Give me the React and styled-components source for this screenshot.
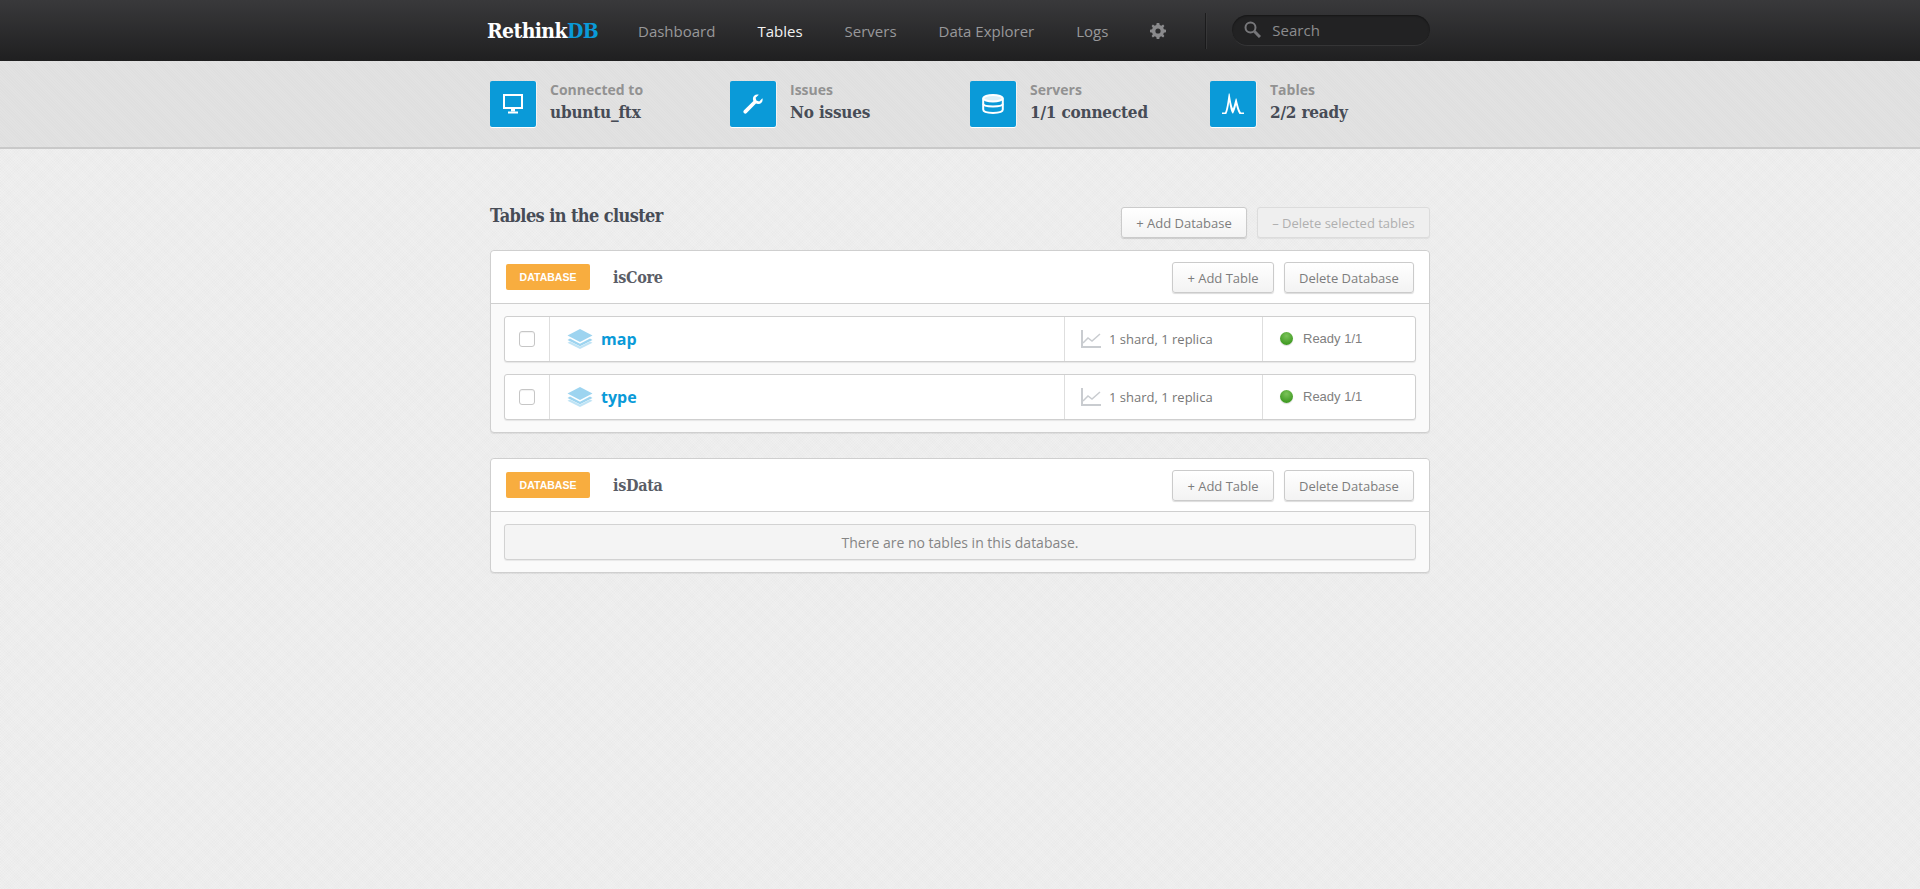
import React from "react";
import styled, { createGlobalStyle } from "styled-components";

const SERIF = '"DejaVu Serif Condensed", "DejaVu Serif", serif';
const SANS = '"Open Sans", sans-serif';
const HELV = '"Liberation Sans", sans-serif';

const GlobalStyle = createGlobalStyle`
  html, body {
    margin: 0;
    padding: 0;
    height: 100%;
  }
  body {
    font-family: ${SANS};
    background-color: #ededed;
    background-image: repeating-linear-gradient(45deg, rgba(255,255,255,0.14) 0 1px, transparent 1px 2px),
      repeating-linear-gradient(-45deg, rgba(0,0,0,0.012) 0 1px, transparent 1px 2px);
  }
  #root {
    min-height: 889px;
  }
`;

const Wrap = styled.div`
  width: 940px;
  margin: 0 auto;
`;

const TopBar = styled.header`
  height: 61px;
  background: linear-gradient(#39393b, #1f1f20);
`;
const TopInner = styled(Wrap)`
  display: flex;
  align-items: center;
  height: 61px;
`;
const Logo = styled.div`
  flex: none;
  width: 151px;
  margin-left: -3px;
  font-family: ${SERIF};
  font-weight: 700;
  font-size: 21px;
  letter-spacing: -0.6px;
  color: #fff;
  span {
    color: #0a9ad8;
  }
`;
const Nav = styled.nav`
  display: flex;
  flex: none;
  align-items: center;
  gap: 42px;
  font-size: 15px;
`;
const NavLink = styled.a`
  white-space: nowrap;
  color: ${(p) => (p.$active ? "#f2f2f2" : "#98989a")};
`;
const Gear = styled.svg`
  display: block;
  width: 16px;
  height: 16px;
  margin-top: 1px;
  fill: #8a8a8c;
`;
const Divider = styled.div`
  flex: none;
  width: 1px;
  height: 36px;
  margin-left: 39px;
  background: #171718;
  border-right: 1px solid #3a3a3b;
  opacity: 0.8;
`;
const Search = styled.div`
  display: flex;
  flex: none;
  align-items: center;
  box-sizing: border-box;
  width: 198px;
  height: 31px;
  margin-left: 25px;
  margin-top: -1px;
  padding-left: 12px;
  border-radius: 16px;
  background: #222223;
  border-bottom: 1px solid #353536;
  box-shadow: inset 0 1px 2px rgba(0, 0, 0, 0.4);
  color: #8c8c8e;
  font-size: 15px;
`;
const SearchIcon = styled.svg`
  width: 17px;
  height: 17px;
  margin-right: 11px;
  fill: none;
  stroke: #77777a;
  stroke-width: 2;
`;

const StatusBar = styled.section`
  height: 86px;
  background-color: #dfdfdf;
  background-image: repeating-linear-gradient(45deg, rgba(255,255,255,0.1) 0 1px, transparent 1px 2px);
  border-bottom: 2px solid #c9c9c9;
`;
const StatusInner = styled(Wrap)`
  display: grid;
  grid-template-columns: repeat(4, 240px);
  padding-top: 20px;
`;
const StatusItem = styled.div`
  display: flex;
  align-items: flex-start;
`;
const StatusIcon = styled.div`
  display: flex;
  align-items: center;
  justify-content: center;
  width: 46px;
  height: 46px;
  border-radius: 2px;
  background: #0a9ad8;
  box-shadow: 0 1px 0 #fff, 1px 0 0 rgba(255, 255, 255, 0.6);
  svg {
    display: block;
  }
`;
const StatusText = styled.div`
  margin-left: 14px;
  margin-top: -2px;
`;
const StatusLabel = styled.div`
  margin-top: 1px;
  font-size: 14px;
  line-height: 20px;
  font-weight: 700;
  color: #929292;
`;
const StatusValue = styled.div`
  margin-top: 1px;
  font-family: ${SERIF};
  font-size: 17px;
  line-height: 22px;
  font-weight: 700;
  color: #474c56;
  letter-spacing: -0.2px;
`;

const Main = styled(Wrap)`
  padding-top: 58px;
`;
const TitleRow = styled.div`
  display: flex;
  align-items: flex-start;
  justify-content: space-between;
  height: 43px;
`;
const Title = styled.h1`
  margin: -3px 0 0;
  font-family: ${SERIF};
  font-size: 18px;
  line-height: 24px;
  font-weight: 700;
  color: #474c56;
  letter-spacing: -0.6px;
`;
const Actions = styled.div`
  display: flex;
  gap: 10px;
`;
const Button = styled.button`
  box-sizing: border-box;
  height: 31px;
  padding: 1px 14.2px 0;
  border: 1px solid ${(p) => (p.$off ? "#dcdcdc" : "#cbcbcb")};
  border-radius: 3px;
  background: ${(p) => (p.$off ? "#efefef" : "linear-gradient(#ffffff, #f3f3f3)")};
  box-shadow: 0 1px 1px rgba(0, 0, 0, ${(p) => (p.$off ? 0.06 : 0.14)});
  font-family: ${SANS};
  font-size: 13px;
  color: ${(p) => (p.$off ? "#b0b0b0" : "#7d7d7d")};
`;

const Panel = styled.section`
  margin-bottom: 25px;
  border: 1px solid #cfcfcf;
  border-radius: 4px;
  background: #fafafa;
  box-shadow: 0 1px 1px rgba(0, 0, 0, 0.07);
`;
const PanelHead = styled.div`
  display: flex;
  align-items: center;
  height: 52px;
  padding: 0 15px;
  background: #fff;
  border-bottom: 1px solid #cfcfcf;
  border-radius: 4px 4px 0 0;
`;
const Badge = styled.div`
  display: flex;
  align-items: center;
  justify-content: center;
  width: 84px;
  height: 26px;
  border-radius: 2px;
  background: #f8ad3f;
  font-family: ${HELV};
  font-size: 10.5px;
  font-weight: 700;
  color: #fff;
`;
const DbName = styled.div`
  flex: 1;
  margin-left: 23px;
  font-family: ${SERIF};
  font-size: 16px;
  font-weight: 700;
  color: #5a5d66;
  letter-spacing: -0.3px;
`;
const PanelBody = styled.div`
  display: flex;
  flex-direction: column;
  gap: 12px;
  padding: 12px 13px;
`;
const Row = styled.div`
  display: grid;
  grid-template-columns: 44px 515px 198px 1fr;
  height: 46px;
  box-sizing: border-box;
  border: 1px solid #cfcfcf;
  border-radius: 3px;
  background: #fff;
  box-shadow: 0 1px 1px rgba(0, 0, 0, 0.08);
`;
const Cell = styled.div`
  display: flex;
  align-items: center;
  border-left: ${(p) => (p.$first ? "none" : "1px solid #dedede")};
  padding-left: ${(p) => p.$pad || 0}px;
  justify-content: ${(p) => (p.$first ? "center" : "flex-start")};
`;
const Check = styled.span`
  display: block;
  box-sizing: border-box;
  width: 16px;
  height: 16px;
  border: 1px solid #c6c6c6;
  border-radius: 3px;
  background: #fff;
  box-shadow: inset 0 1px 1px rgba(0, 0, 0, 0.06);
`;
const TableName = styled.a`
  margin-left: 8px;
  font-size: 16px;
  font-weight: 700;
  color: #0a9ad8;
`;
const ShardText = styled.span`
  margin-left: 8px;
  font-size: 13px;
  color: #777;
`;
const Dot = styled.span`
  width: 13px;
  height: 13px;
  margin-top: -1px;
  border-radius: 50%;
  background: radial-gradient(circle at 50% 30%, #7cc35a, #3f9a22 75%);
  box-shadow: 0 1px 1px rgba(0, 0, 0, 0.15);
`;
const ReadyText = styled.span`
  margin-left: 10px;
  margin-top: -2px;
  font-family: ${HELV};
  font-size: 13px;
  color: #808080;
`;
const Empty = styled.div`
  display: flex;
  align-items: center;
  justify-content: center;
  height: 36px;
  box-sizing: border-box;
  border: 1px solid #d2d2d2;
  border-radius: 3px;
  background: #f4f4f4;
  box-shadow: 0 1px 1px rgba(0, 0, 0, 0.07);
  font-size: 14px;
  color: #858585;
`;

const LayersIcon = () => (
  <svg width="26" height="20" viewBox="0 0 26 20">
    <path d="M13 0 L25.5 6.5 L13 13 L0.5 6.5 Z" fill="#9dd4f0" />
    <path d="M3 9.6 L13 14.8 L23 9.6 L25.5 10.9 L13 17.2 L0.5 10.9 Z" fill="#9dd4f0" />
    <path d="M3 12.4 L13 17.6 L23 12.4 L25.5 13.7 L13 20 L0.5 13.7 Z" fill="#bfe3f5" />
  </svg>
);

const ChartIcon = () => (
  <svg width="20" height="18" viewBox="0 0 20 18" fill="none">
    <path d="M1 0 V17 H20" stroke="#c9ccd0" strokeWidth="2" />
    <path d="M2 13 L7 8 L11 11 L19 4" stroke="#c9ccd0" strokeWidth="1.5" />
  </svg>
);

const MonitorIcon = () => (
  <svg width="20" height="20" viewBox="0 0 20 20" fill="none">
    <rect x="1" y="1" width="18" height="13" stroke="#fff" strokeWidth="2" />
    <rect x="8" y="15" width="4" height="2.5" fill="#fff" />
    <rect x="5" y="17.5" width="10" height="2" fill="#fff" />
  </svg>
);

const WrenchIcon = () => (
  <svg width="20" height="20" viewBox="0 0 20 20">
    <path
      d="M19.4 4.3 L16.2 7.4 L13.4 6.6 L12.6 3.8 L15.8 0.7 C12.9 -0.4 9.7 1.7 9.9 5 C9.9 5.8 10.1 6.5 10.4 7 L1 16.3 C0 17.3 0.3 18.4 1 19.1 C1.7 19.8 2.8 20 3.7 19 L13 9.6 C13.6 9.9 14.3 10.1 15 10.1 C18.3 10.3 20.4 7.2 19.4 4.3 Z"
      fill="#fff"
    />
  </svg>
);

const DatabaseIcon = () => (
  <svg width="22" height="20" viewBox="0 0 22 20" fill="none" stroke="#fff">
    <ellipse cx="11" cy="4.2" rx="9.7" ry="3.2" strokeWidth="2" fill="#fff" fillOpacity="0.85" />
    <path d="M1.2 4.2 V15.5 C1.2 20 20.8 20 20.8 15.5 V4.2" strokeWidth="2" />
    <path d="M1.2 9.7 C1.2 13.3 20.8 13.3 20.8 9.7" strokeWidth="2" />
  </svg>
);

const PulseIcon = () => (
  <svg width="22" height="22" viewBox="0 0 22 22" fill="#fff">
    <path d="M0 19.5 H3 C4.5 17 5.6 8 6.8 0.5 H7.6 C8.6 7 9.8 13.5 11 15.5 C11.9 13 12.8 8.5 13.8 5.5 H14.5 C15.5 10 17 16.5 19 19.5 H22 V21 H17.5 C15.8 18.5 14.8 15 14.1 12 C13.3 15.5 12.3 18.5 11.1 20.5 H10.5 C9 18.5 8 13.5 7.2 9 C6.6 14 5.6 18.5 4.3 21 H0 Z" />
  </svg>
);

const STATUS = [
  { label: "Connected to", value: "ubuntu_ftx", Icon: MonitorIcon },
  { label: "Issues", value: "No issues", Icon: WrenchIcon },
  { label: "Servers", value: "1/1 connected", Icon: DatabaseIcon },
  { label: "Tables", value: "2/2 ready", Icon: PulseIcon },
];

const NAV = ["Dashboard", "Tables", "Servers", "Data Explorer", "Logs"];

const TableRow = ({ name }) => (
  <Row>
    <Cell $first>
      <Check />
    </Cell>
    <Cell $pad={17}>
      <LayersIcon />
      <TableName>{name}</TableName>
    </Cell>
    <Cell $pad={16}>
      <ChartIcon />
      <ShardText>1 shard, 1 replica</ShardText>
    </Cell>
    <Cell $pad={17}>
      <Dot />
      <ReadyText>Ready 1/1</ReadyText>
    </Cell>
  </Row>
);

const Database = ({ name, children }) => (
  <Panel>
    <PanelHead>
      <Badge>DATABASE</Badge>
      <DbName>{name}</DbName>
      <Actions>
        <Button>+ Add Table</Button>
        <Button>Delete Database</Button>
      </Actions>
    </PanelHead>
    <PanelBody>{children}</PanelBody>
  </Panel>
);

export default function App() {
  return (
    <>
      <GlobalStyle />
      <TopBar>
        <TopInner>
          <Logo>
            Rethink<span>DB</span>
          </Logo>
          <Nav>
            {NAV.map((item) => (
              <NavLink key={item} $active={item === "Tables"}>
                {item}
              </NavLink>
            ))}
            <Gear viewBox="0 0 16 16">
              <path
                fillRule="evenodd"
                d="M6.7 0 H9.3 L9.7 2.1 L11.3 2.8 L13.1 1.6 L14.4 2.9 L13.2 4.7 L13.9 6.3 L16 6.7 V9.3 L13.9 9.7 L13.2 11.3 L14.4 13.1 L13.1 14.4 L11.3 13.2 L9.7 13.9 L9.3 16 H6.7 L6.3 13.9 L4.7 13.2 L2.9 14.4 L1.6 13.1 L2.8 11.3 L2.1 9.7 L0 9.3 V6.7 L2.1 6.3 L2.8 4.7 L1.6 2.9 L2.9 1.6 L4.7 2.8 L6.3 2.1 Z M8 5.4 A2.6 2.6 0 1 0 8 10.6 A2.6 2.6 0 1 0 8 5.4 Z"
              />
            </Gear>
          </Nav>
          <Divider />
          <Search>
            <SearchIcon viewBox="0 0 17 17">
              <circle cx="6.5" cy="6.5" r="5" />
              <path d="M10.5 10.5 L16 16" strokeWidth="3" />
            </SearchIcon>
            Search
          </Search>
        </TopInner>
      </TopBar>
      <StatusBar>
        <StatusInner>
          {STATUS.map(({ label, value, Icon }) => (
            <StatusItem key={label}>
              <StatusIcon>
                <Icon />
              </StatusIcon>
              <StatusText>
                <StatusLabel>{label}</StatusLabel>
                <StatusValue>{value}</StatusValue>
              </StatusText>
            </StatusItem>
          ))}
        </StatusInner>
      </StatusBar>
      <Main>
        <TitleRow>
          <Title>Tables in the cluster</Title>
          <Actions>
            <Button>+ Add Database</Button>
            <Button $off>– Delete selected tables</Button>
          </Actions>
        </TitleRow>
        <Database name="isCore">
          <TableRow name="map" />
          <TableRow name="type" />
        </Database>
        <Database name="isData">
          <Empty>There are no tables in this database.</Empty>
        </Database>
      </Main>
    </>
  );
}
